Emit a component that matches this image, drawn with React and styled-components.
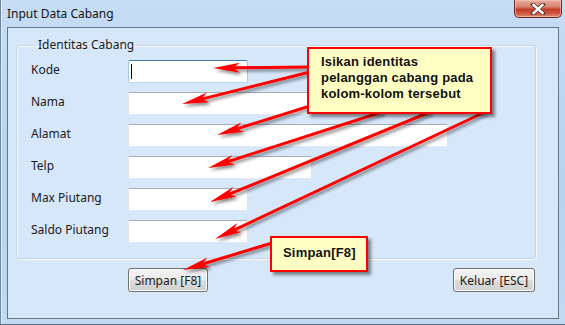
import React from "react";
import styled, { createGlobalStyle } from "styled-components";

const GlobalStyle = createGlobalStyle`
  html, body { margin: 0; padding: 0; }
  body {
    width: 565px;
    height: 325px;
    overflow: hidden;
    font-family: "Noto Sans", "Open Sans", sans-serif;
    background: #b9d3ee;
  }
  * { box-sizing: border-box; }
`;

const Window = styled.div`
  position: relative;
  width: 565px;
  height: 325px;
  display: flex;
  flex-direction: column;
  background: linear-gradient(180deg, #c6ddf4 0%, #bcd6f0 35%, #b9d3ee 60%, #c1d9f1 100%);
  border-left: 1px solid #71849b;
  border-bottom: 1px solid #5d6c7e;
  box-shadow: inset 1px 0 0 #e4f0fb;
`;

const TitleBar = styled.div`
  height: 27px;
  flex: 0 0 27px;
  display: flex;
  justify-content: space-between;
  align-items: flex-start;
`;

const Title = styled.span`
  align-self: center;
  padding-left: 6px;
  padding-top: 1px;
  font-size: 12px;
  line-height: 16px;
  color: #141414;
`;

const CloseButton = styled.div`
  width: 48px;
  height: 18px;
  margin-right: 3px;
  border: 1px solid #6e2a1e;
  border-top: none;
  border-radius: 0 0 5px 5px;
  background: linear-gradient(180deg, #e9a99c 0%, #d98471 40%, #c23b25 55%, #cf5b44 80%, #e08d76 100%);
  box-shadow: inset 0 0 0 1px rgba(255, 220, 210, 0.45);
  display: flex;
  align-items: center;
  justify-content: center;
`;

const Client = styled.div`
  flex: 1;
  margin: 0 6px 5px 6px;
  border: 1px solid #66768a;
  background: #d6e7fa;
  display: flex;
  flex-direction: column;
`;

const GroupBox = styled.fieldset`
  margin: 9px 22px 0 8px;
  padding: 0 0 15px 14px;
  border: 1px solid #c9d5e1;
  border-radius: 3px;
  box-shadow: inset 1px 1px 0 #f6faff, 1px 1px 0 #f6faff;
`;

const GroupTitle = styled.legend`
  margin-left: 5px;
  padding: 0 2px;
  font-size: 12px;
  line-height: 16px;
  color: #1a1a1a;
`;

const FormGrid = styled.div`
  margin-top: 7px;
  display: grid;
  grid-template-columns: 97px 1fr;
  grid-auto-rows: 23px;
  row-gap: 9px;
`;

const Label = styled.div`
  font-size: 12px;
  line-height: 19px;
  color: #1a1a1a;
  white-space: nowrap;
`;

const TextBox = styled.div`
  position: relative;
  width: ${(p) => p.$w}px;
  height: 23px;
  background: #ffffff;
  border: 1px solid;
  border-radius: 2px;
  border-color: ${(p) =>
    p.$focused ? "#3d7bad #a4c9e3 #b7d9ed #a4c9e3" : "#abadb3 #e2e3ea #e3e9ef #e2e3ea"};
`;

const Caret = styled.span`
  position: absolute;
  left: 2px;
  top: 3px;
  width: 1px;
  height: 15px;
  background: #000;
`;

const ButtonRow = styled.div`
  margin: 9px 22px 0 8px;
  padding: 0 1px 0 112px;
  display: flex;
  justify-content: space-between;
`;

const Button = styled.div`
  width: ${(p) => p.$w}px;
  height: 24px;
  border: 1px solid #707070;
  border-radius: 3px;
  background: linear-gradient(180deg, #f3f3f3 0%, #ebebeb 48%, #dddddd 52%, #cfcfcf 100%);
  box-shadow: inset 0 0 0 1px #fcfcfc;
  display: flex;
  align-items: center;
  justify-content: center;
  font-size: 12px;
  color: #1a1a1a;
  white-space: nowrap;
`;

const Overlay = styled.svg`
  position: absolute;
  left: -1px;
  top: 0;
  width: 565px;
  height: 325px;
  pointer-events: none;
  overflow: visible;
`;

const Callout = styled.div`
  position: absolute;
  left: ${(p) => p.$x - 1}px;
  top: ${(p) => p.$y}px;
  width: ${(p) => p.$w}px;
  height: ${(p) => p.$h}px;
  padding: ${(p) => p.$pad};
  background: #ffffc4;
  border: 2px solid #ff0000;
  box-shadow: 3px 3px 3px rgba(0, 0, 0, 0.45);
  font-family: "Liberation Sans", Arial, sans-serif;
  font-weight: bold;
  font-size: 13px;
  line-height: 16px;
  letter-spacing: 0.2px;
  color: #111;
  white-space: nowrap;
`;

function Arrow({ x1, y1, x2, y2 }) {
  const dx = x2 - x1;
  const dy = y2 - y1;
  const len = Math.hypot(dx, dy);
  const ux = dx / len;
  const uy = dy / len;
  const nx = -uy;
  const ny = ux;
  const L = 27;
  const W = 5;
  const N = 7;
  const bx = x2 - ux * L;
  const by = y2 - uy * L;
  const mx = x2 - ux * (L - N);
  const my = y2 - uy * (L - N);
  const pts = [
    [x2, y2],
    [bx + nx * W, by + ny * W],
    [mx, my],
    [bx - nx * W, by - ny * W],
  ]
    .map((p) => p.map((v) => v.toFixed(1)).join(","))
    .join(" ");
  return (
    <g filter="url(#shadow)">
      <line x1={x1} y1={y1} x2={mx + ux * 2} y2={my + uy * 2} stroke="#ff0000" strokeWidth="3" strokeLinecap="round" />
      <polygon points={pts} fill="#ff0000" />
    </g>
  );
}

const arrows = [
  [310, 67, 213, 68],
  [310, 72, 182, 104],
  [310, 106, 217, 135],
  [382, 112, 208, 168],
  [430, 112, 210, 202],
  [485, 112, 215, 239],
  [272, 243, 183, 270],
];

const fields = [
  { label: "Kode", w: 120, focused: true },
  { label: "Nama", w: 184 },
  { label: "Alamat", w: 320 },
  { label: "Telp", w: 184 },
  { label: "Max Piutang", w: 120 },
  { label: "Saldo Piutang", w: 120 },
];

export default function App() {
  return (
    <>
      <GlobalStyle />
      <Window>
        <TitleBar>
          <Title>Input Data Cabang</Title>
          <CloseButton>
            <svg width="16" height="12" viewBox="0 0 16 12">
              <path d="M3 1.5 L13 10.5 M13 1.5 L3 10.5" stroke="#4a3a36" strokeWidth="4" strokeLinecap="square" />
              <path d="M3.5 2 L12.5 10 M12.5 2 L3.5 10" stroke="#ffffff" strokeWidth="2.4" strokeLinecap="square" />
            </svg>
          </CloseButton>
        </TitleBar>
        <Client>
          <GroupBox>
            <GroupTitle>Identitas Cabang</GroupTitle>
            <FormGrid>
              {fields.map((f) => (
                <React.Fragment key={f.label}>
                  <Label>{f.label}</Label>
                  <TextBox $w={f.w} $focused={f.focused}>
                    {f.focused && <Caret />}
                  </TextBox>
                </React.Fragment>
              ))}
            </FormGrid>
          </GroupBox>
          <ButtonRow>
            <Button $w={80}>Simpan [F8]</Button>
            <Button $w={82}>Keluar [ESC]</Button>
          </ButtonRow>
        </Client>

        <Overlay viewBox="0 0 565 325">
          <defs>
            <filter id="shadow" x="-20%" y="-50%" width="140%" height="200%">
              <feDropShadow dx="2" dy="2.5" stdDeviation="1.5" floodColor="#000" floodOpacity="0.45" />
            </filter>
          </defs>
          {arrows.map((a, i) => (
            <Arrow key={i} x1={a[0]} y1={a[1]} x2={a[2]} y2={a[3]} />
          ))}
        </Overlay>

        <Callout $x={307} $y={47} $w={185} $h={67} $pad="5px 0 0 12px">
          Isikan identitas
          <br />
          pelanggan cabang pada
          <br />
          kolom-kolom tersebut
        </Callout>
        <Callout $x={270} $y={236} $w={98} $h={36} $pad="7px 0 0 11px">
          Simpan[F8]
        </Callout>
      </Window>
    </>
  );
}
